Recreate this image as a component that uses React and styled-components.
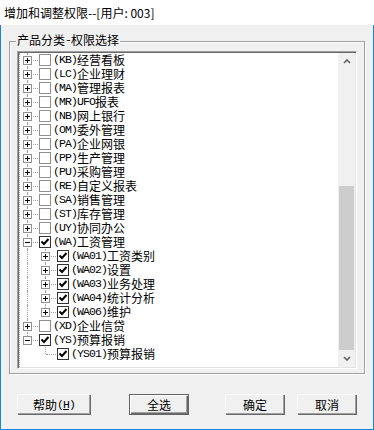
import React from 'react'
import styled, { createGlobalStyle } from 'styled-components'

const GlobalStyle = createGlobalStyle`
  html, body {
    margin: 0;
    padding: 0;
    background: #f0f0f0;
  }
  body {
    width: 374px;
    height: 430px;
    overflow: hidden;
    font-family: "Noto Sans CJK SC", sans-serif;
    color: #000;
  }
`

const items = [
  { code: 'KB', name: '经营看板', level: 1, exp: '+', on: false },
  { code: 'LC', name: '企业理财', level: 1, exp: '+', on: false },
  { code: 'MA', name: '管理报表', level: 1, exp: '+', on: false },
  { code: 'MR', name: 'UFO报表', level: 1, exp: '+', on: false },
  { code: 'NB', name: '网上银行', level: 1, exp: '+', on: false },
  { code: 'OM', name: '委外管理', level: 1, exp: '+', on: false },
  { code: 'PA', name: '企业网银', level: 1, exp: '+', on: false },
  { code: 'PP', name: '生产管理', level: 1, exp: '+', on: false },
  { code: 'PU', name: '采购管理', level: 1, exp: '+', on: false },
  { code: 'RE', name: '自定义报表', level: 1, exp: '+', on: false },
  { code: 'SA', name: '销售管理', level: 1, exp: '+', on: false },
  { code: 'ST', name: '库存管理', level: 1, exp: '+', on: false },
  { code: 'UY', name: '协同办公', level: 1, exp: '+', on: false },
  { code: 'WA', name: '工资管理', level: 1, exp: '-', on: true },
  { code: 'WA01', name: '工资类别', level: 2, exp: '+', on: true },
  { code: 'WA02', name: '设置', level: 2, exp: '+', on: true },
  { code: 'WA03', name: '业务处理', level: 2, exp: '+', on: true },
  { code: 'WA04', name: '统计分析', level: 2, exp: '+', on: true },
  { code: 'WA06', name: '维护', level: 2, exp: '+', on: true },
  { code: 'XD', name: '企业信贷', level: 1, exp: '+', on: false },
  { code: 'YS', name: '预算报销', level: 1, exp: '-', on: true },
  { code: 'YS01', name: '预算报销', level: 2, exp: null, on: true },
]

// is there another item at this level below row i, before the branch closes
function hasNext(i, level) {
  for (let j = i + 1; j < items.length; j++) {
    if (items[j].level < level) return false
    if (items[j].level === level) return true
  }
  return false
}

// latin runs get the narrow mono face, the rest the CJK face
function Text({ children }) {
  const runs = children.match(/[\x00-\x7f]+|[^\x00-\x7f]+/g)
  return runs.map((r, k) =>
    /^[\x00-\x7f]/.test(r) ? <Latin key={k}>{r}</Latin> : <Han key={k}>{r}</Han>
  )
}

function CheckMark() {
  return (
    <svg width="10" height="10" viewBox="0 0 10 10">
      <polyline points="1.5,4.5 4,7 8.5,2" fill="none" stroke="#000" strokeWidth="2" />
    </svg>
  )
}

function Arrow({ down }) {
  return (
    <svg width="8" height="5" viewBox="0 0 8 5">
      <polyline
        points={down ? '1,1 4,4 7,1' : '1,4 4,1 7,4'}
        fill="none"
        stroke="#606060"
        strokeWidth="1.6"
      />
    </svg>
  )
}

function TreeRow({ item, index }) {
  const guides = []
  for (let l = 1; l < item.level; l++) {
    guides.push(<Cell key={l} $up={hasNext(index, l)} $down={hasNext(index, l)} />)
  }
  return (
    <Row>
      {guides}
      <Cell $up $down={hasNext(index, item.level)} $right>
        {item.exp && <Expander $plus={item.exp === '+'} />}
      </Cell>
      <Check $on={item.on}>{item.on && <CheckMark />}</Check>
      <Label>
        <Text>{`(${item.code})${item.name}`}</Text>
      </Label>
    </Row>
  )
}

function App() {
  return (
    <>
      <GlobalStyle />
      <Window>
        <TitleBar>增加和调整权限--[用户: 003]</TitleBar>
        <Client>
          <GroupBox>
            <GroupLabel>
              <Han>产品分类</Han>
              <Latin>-</Latin>
              <Han>权限选择</Han>
            </GroupLabel>
            <TreeBox>
              <List>
                {items.map((it, i) => (
                  <TreeRow key={it.code + i} item={it} index={i} />
                ))}
              </List>
              <ScrollBar>
                <ArrowBtn>
                  <Arrow />
                </ArrowBtn>
                <Track>
                  <Thumb />
                </Track>
                <ArrowBtn>
                  <Arrow down />
                </ArrowBtn>
              </ScrollBar>
            </TreeBox>
          </GroupBox>
          <Buttons>
            <Button $w={74}>
              <Han>帮助</Han>
              <Latin>
                (<u>H</u>)
              </Latin>
            </Button>
            <Button $w={60} $ml={38} $default>
              <Han>全选</Han>
            </Button>
            <Button $w={60} $ml={36}>
              <Han>确定</Han>
            </Button>
            <Button $w={60} $ml={12}>
              <Han>取消</Han>
            </Button>
          </Buttons>
        </Client>
      </Window>
    </>
  )
}

export default App

const Window = styled.div`
  width: 374px;
  height: 430px;
  display: flex;
  flex-direction: column;
  background: #f0f0f0;
`

const TitleBar = styled.div`
  height: 25px;
  flex: none;
  background: #fff;
  display: flex;
  align-items: center;
  padding-left: 4px;
  font-size: 12px;
  line-height: 14px;
  font-family: "Noto Sans CJK SC", sans-serif;
`

const Client = styled.div`
  flex: 1;
  border: 1px solid #1883d7;
  border-top: none;
  padding: 16px 0 0 8px;
`

const GroupBox = styled.div`
  position: relative;
  width: 356px;
  height: 333px;
  box-sizing: border-box;
  border: 1px solid #a0a0a0;
  box-shadow: inset 1px 1px 0 #fff, 1px 1px 0 #fff;
  padding: 9px 7px 4px 7px;
`

const GroupLabel = styled.span`
  position: absolute;
  top: -9px;
  left: 6px;
  display: flex;
  padding: 0 1px;
  background: #f0f0f0;
  white-space: nowrap;
`

const Han = styled.span`
  display: inline-block;
  font-family: "Noto Sans CJK SC", sans-serif;
  font-size: 12px;
  line-height: 14px;
  height: 14px;
`

const Latin = styled.span`
  display: inline-block;
  font-family: "Liberation Mono", monospace;
  font-size: 11.5px;
  letter-spacing: -0.9px;
  line-height: 14px;
  height: 14px;

  u {
    text-decoration: underline;
  }
`

const TreeBox = styled.div`
  display: flex;
  height: 100%;
  box-sizing: border-box;
  border: 1px solid;
  border-color: #a0a0a0 #fff #fff #a0a0a0;
  box-shadow: inset 1px 1px 0 #696969, inset -1px -1px 0 #e3e3e3;
  background: #fff;
  padding: 1px;
`

const List = styled.div`
  flex: 1;
  overflow: hidden;
  border-left: 1px dotted #a0a0a0;
`

const Row = styled.div`
  display: flex;
  height: 14px;
`

const Cell = styled.div`
  position: relative;
  flex: none;
  width: 18px;
  height: 14px;

  &::before {
    content: '';
    display: ${p => (p.$up || p.$down ? 'block' : 'none')};
    position: absolute;
    left: 7px;
    top: ${p => (p.$up ? '0' : '7px')};
    bottom: ${p => (p.$down ? '0' : '7px')};
    border-left: 1px dotted #a0a0a0;
  }

  &::after {
    content: '';
    display: ${p => (p.$right ? 'block' : 'none')};
    position: absolute;
    left: 8px;
    right: 0;
    top: 7px;
    border-top: 1px dotted #a0a0a0;
  }
`

const Expander = styled.span`
  position: absolute;
  left: 3px;
  top: 3px;
  z-index: 1;
  width: 9px;
  height: 9px;
  box-sizing: border-box;
  border: 1px solid #919191;
  background: #fff;

  &::before {
    content: '';
    position: absolute;
    left: 1px;
    top: 3px;
    width: 5px;
    height: 1px;
    background: #000;
  }

  &::after {
    content: '';
    display: ${p => (p.$plus ? 'block' : 'none')};
    position: absolute;
    left: 3px;
    top: 1px;
    width: 1px;
    height: 5px;
    background: #000;
  }
`

const Check = styled.span`
  flex: none;
  width: 12px;
  height: 12px;
  box-sizing: border-box;
  margin: 1px 2px 0 1px;
  border: 1px solid ${p => (p.$on ? '#333' : '#8f8f8f')};
  background: #fff;
  display: flex;
  align-items: center;
  justify-content: center;
`

const Label = styled.span`
  display: flex;
  height: 14px;
  white-space: nowrap;
`

const ScrollBar = styled.div`
  flex: none;
  width: 17px;
  display: flex;
  flex-direction: column;
  background: #f0f0f0;
`

const ArrowBtn = styled.div`
  height: 17px;
  flex: none;
  display: flex;
  align-items: center;
  justify-content: center;
`

const Track = styled.div`
  flex: 1;
  display: flex;
  flex-direction: column;
  justify-content: flex-end;
`

const Thumb = styled.div`
  height: 164px;
  margin: 0 1px;
  background: #cdcdcd;
`

const Buttons = styled.div`
  display: flex;
  margin-top: 20px;
  padding-left: 8px;
`

const Button = styled.button`
  width: ${p => p.$w}px;
  height: 21px;
  margin: 0 0 0 ${p => p.$ml || 0}px;
  padding: 0;
  box-sizing: border-box;
  display: flex;
  align-items: center;
  justify-content: center;
  background: #f0f0f0;
  border: ${p => (p.$default ? '1px solid #646464' : 'none')};
  box-shadow: inset 1px 1px 0 #fff, inset -1px -1px 0 #696969, inset -2px -2px 0 #a0a0a0;
  color: #000;
`
